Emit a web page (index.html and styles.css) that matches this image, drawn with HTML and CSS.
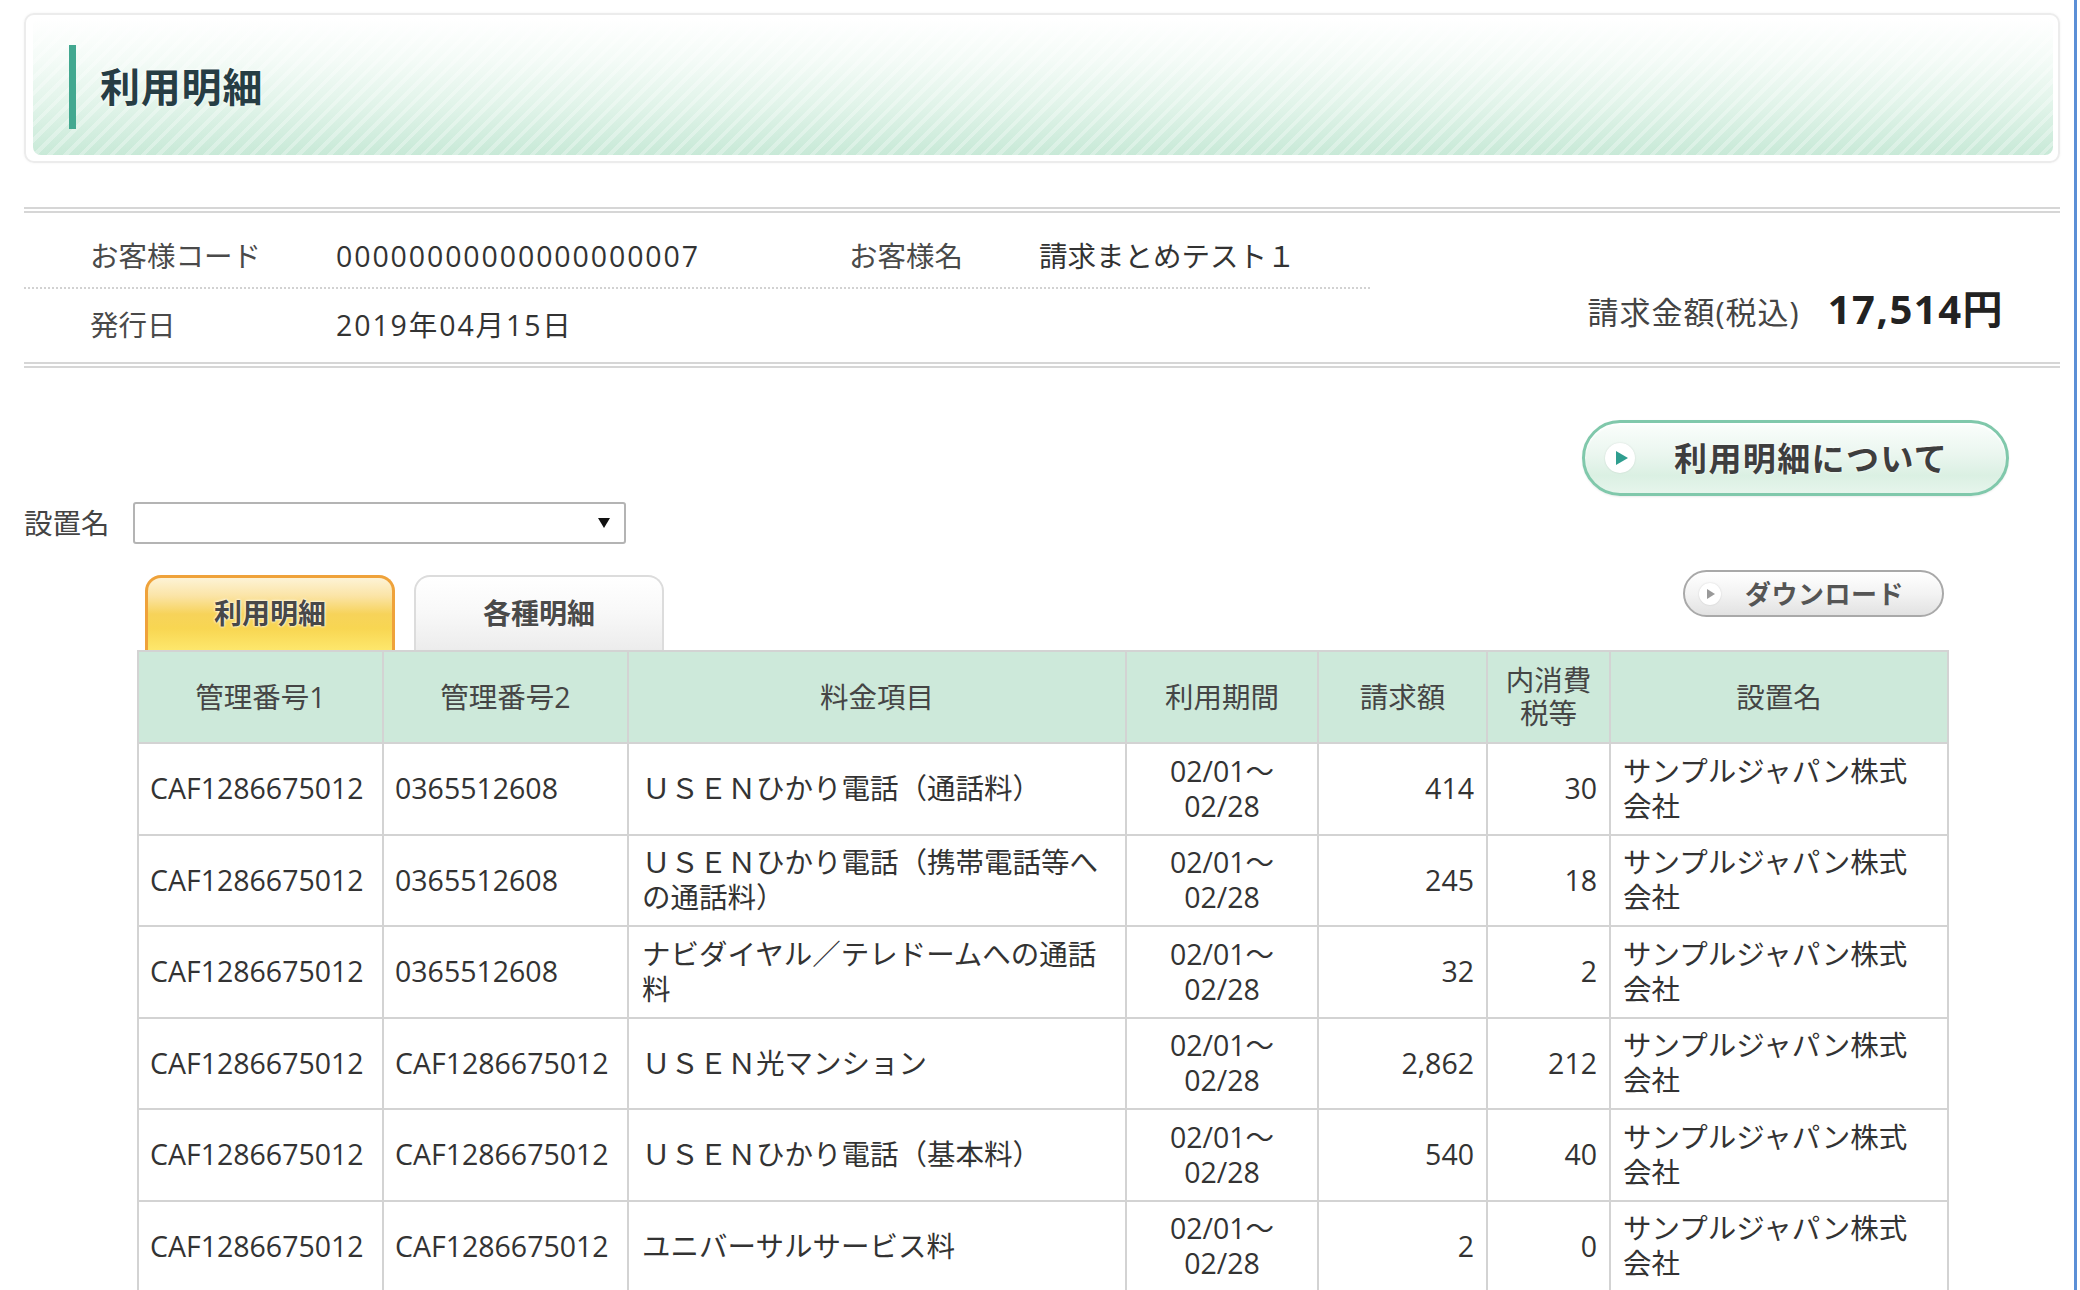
FILE: index.html
```html
<!DOCTYPE html>
<html lang="ja">
<head>
<meta charset="utf-8">
<title>利用明細</title>
<link rel="stylesheet" href="styles.css">
</head>
<body>
<div class="frame">
  <div class="page">
    <header class="page-head">
      <div class="page-head-inner">
        <span class="head-bar"></span>
        <h1>利用明細</h1>
      </div>
    </header>

    <section class="summary">
      <div class="summary-info">
        <div class="info-row row-1">
          <span class="label">お客様コード</span>
          <span class="value num code">00000000000000000007</span>
          <span class="label label-name">お客様名</span>
          <span class="value">請求まとめテスト１</span>
        </div>
        <div class="info-row row-2">
          <span class="label">発行日</span>
          <span class="value num">2019年04月15日</span>
        </div>
      </div>
      <div class="summary-total">
        <span class="total-label">請求金額(税込)</span>
        <span class="total-amount">17,514円</span>
      </div>
    </section>

    <div class="toolbar">
      <div class="filter">
        <span class="filter-label">設置名</span>
        <div class="select">
          <svg class="select-arrow" width="12" height="12" viewBox="0 0 12 12"><path d="M0 1 L12 1 L6 11 Z" fill="#111"/></svg>
        </div>
      </div>
      <a class="btn-about">
        <span class="about-icon"><svg width="14" height="16" viewBox="0 0 14 16"><path d="M1 1 L13 8 L1 15 Z" fill="#2f9e8f"/></svg></span>
        <span class="about-text">利用明細について</span>
      </a>
    </div>

    <div class="tab-row">
      <div class="tabs">
        <div class="tab tab-active">利用明細</div>
        <div class="tab tab-inactive">各種明細</div>
      </div>
      <a class="btn-download">
        <span class="dl-icon"><svg width="10" height="12" viewBox="0 0 10 12"><path d="M1 1 L9 6 L1 11 Z" fill="#9a9a9a"/></svg></span>
        <span class="dl-text">ダウンロード</span>
      </a>
    </div>

    <table class="detail-table">
      <colgroup>
        <col class="w-id"><col class="w-id"><col class="w-item"><col class="w-period"><col class="w-amount"><col class="w-tax"><col class="w-place">
      </colgroup>
      <thead>
        <tr>
          <th>管理番号1</th>
          <th>管理番号2</th>
          <th>料金項目</th>
          <th>利用期間</th>
          <th>請求額</th>
          <th>内消費税等</th>
          <th>設置名</th>
        </tr>
      </thead>
      <tbody>
        <tr>
          <td class="c-id">CAF1286675012</td>
          <td class="c-id">0365512608</td>
          <td class="c-item">ＵＳＥＮひかり電話（通話料）</td>
          <td class="c-period">02/01～<br>02/28</td>
          <td class="c-num">414</td>
          <td class="c-num">30</td>
          <td class="c-place">サンプルジャパン株式会社</td>
        </tr>
        <tr>
          <td class="c-id">CAF1286675012</td>
          <td class="c-id">0365512608</td>
          <td class="c-item">ＵＳＥＮひかり電話（携帯電話等への通話料）</td>
          <td class="c-period">02/01～<br>02/28</td>
          <td class="c-num">245</td>
          <td class="c-num">18</td>
          <td class="c-place">サンプルジャパン株式会社</td>
        </tr>
        <tr>
          <td class="c-id">CAF1286675012</td>
          <td class="c-id">0365512608</td>
          <td class="c-item">ナビダイヤル／テレドームへの通話料</td>
          <td class="c-period">02/01～<br>02/28</td>
          <td class="c-num">32</td>
          <td class="c-num">2</td>
          <td class="c-place">サンプルジャパン株式会社</td>
        </tr>
        <tr>
          <td class="c-id">CAF1286675012</td>
          <td class="c-id">CAF1286675012</td>
          <td class="c-item">ＵＳＥＮ光マンション</td>
          <td class="c-period">02/01～<br>02/28</td>
          <td class="c-num">2,862</td>
          <td class="c-num">212</td>
          <td class="c-place">サンプルジャパン株式会社</td>
        </tr>
        <tr>
          <td class="c-id">CAF1286675012</td>
          <td class="c-id">CAF1286675012</td>
          <td class="c-item">ＵＳＥＮひかり電話（基本料）</td>
          <td class="c-period">02/01～<br>02/28</td>
          <td class="c-num">540</td>
          <td class="c-num">40</td>
          <td class="c-place">サンプルジャパン株式会社</td>
        </tr>
        <tr>
          <td class="c-id">CAF1286675012</td>
          <td class="c-id">CAF1286675012</td>
          <td class="c-item">ユニバーサルサービス料</td>
          <td class="c-period">02/01～<br>02/28</td>
          <td class="c-num">2</td>
          <td class="c-num">0</td>
          <td class="c-place">サンプルジャパン株式会社</td>
        </tr>
      </tbody>
    </table>
  </div>
</div>
</body>
</html>
```

FILE: styles.css
```css
* { box-sizing: border-box; }
html, body { margin: 0; padding: 0; background: #fff; }
body {
  font-family: "Open Sans", "Noto Sans CJK JP", sans-serif;
  font-size: 28.5px;
  color: #333;
  overflow: hidden;
}
.frame {
  width: 2077px;
  min-height: 1290px;
  border-right: 3px solid #5b8fd6;
}
.page {
  margin-left: 24px;
  width: 2036px;
  padding-top: 13px;
}

/* page heading */
.page-head {
  border: 2px solid #ececec;
  border-radius: 10px;
  padding: 4px 5px 6px 7px;
  box-shadow: 0 0 3px rgba(0,0,0,0.05);
}
.page-head-inner {
  height: 136px;
  border-radius: 8px;
  display: flex;
  align-items: center;
  padding-left: 36px;
  background:
    repeating-linear-gradient(135deg, rgba(255,255,255,0) 0 7px, rgba(255,255,255,0.3) 7px 11px),
    linear-gradient(to bottom, #ffffff 0%, #f4fbf7 30%, #e2f4ea 62%, #c8e9d7 100%);
}
.head-bar {
  width: 7px;
  height: 84px;
  background: #42a890;
}
.page-head h1 {
  margin: 0 0 0 24px;
  font-size: 40px;
  font-weight: 700;
  line-height: 1;
  color: #263d44;
  letter-spacing: 0.8px;
  text-shadow: 0 0 3px #fff;
}

/* summary */
.summary {
  margin-top: 44px;
  display: flex;
  border-top: 6px double #d6d6d6;
  border-bottom: 6px double #d6d6d6;
}
.summary-info { width: 1346px; }
.info-row {
  display: flex;
  align-items: center;
  padding-left: 66px;
}
.row-1 {
  height: 76px;
  padding-top: 13px;
  border-bottom: 2px dotted #d2d2d2;
}
.row-2 { height: 73px; }
.label {
  width: 246px;
  color: #4a4a4a;
  line-height: 1.2;
}
.label-name { width: 190px; }
.value { color: #333; line-height: 1.2; }
.num { letter-spacing: 1.9px; }
.code { width: 513px; }
.summary-total {
  flex: 1;
  display: flex;
  justify-content: flex-end;
  align-items: baseline;
  padding-right: 56px;
  padding-top: 72px;
}
.total-label {
  font-size: 31px;
  color: #444;
  line-height: 1.2;
  letter-spacing: 1px;
}
.total-amount {
  margin-left: 28px;
  font-size: 40px;
  font-weight: 700;
  color: #222;
  letter-spacing: 1.5px;
  line-height: 1.2;
}

/* toolbar */
.toolbar {
  margin-top: 52px;
  padding-right: 51px;
  display: flex;
  justify-content: space-between;
  align-items: flex-start;
}
.filter {
  margin-top: 82px;
  display: flex;
  align-items: center;
}
.filter-label {
  color: #444;
  line-height: 1.2;
}
.select {
  margin-left: 23px;
  width: 493px;
  height: 42px;
  border: 2px solid #b4b4b4;
  border-radius: 3px;
  background: #fff;
  display: flex;
  align-items: center;
  justify-content: flex-end;
  padding-right: 14px;
}
.btn-about {
  width: 427px;
  height: 76px;
  border: 3px solid #80c8ab;
  border-radius: 38px;
  background: linear-gradient(to bottom, #fbfefc 0%, #eaf6ef 45%, #dbf0e3 75%, #e6f5ec 100%);
  box-shadow: inset 0 2px 2px rgba(255,255,255,0.9), 0 1px 2px rgba(0,0,0,0.08);
  display: flex;
  align-items: center;
  padding-left: 20px;
  text-decoration: none;
}
.about-icon {
  width: 30px;
  height: 30px;
  border-radius: 50%;
  background: #fff;
  box-shadow: 0 0 2px rgba(0,0,0,0.12);
  display: flex;
  align-items: center;
  justify-content: center;
  padding-left: 3px;
}
.about-text {
  margin-left: 39px;
  font-size: 33px;
  font-weight: 700;
  color: #3e3e3e;
  letter-spacing: 1.4px;
  line-height: 1;
  text-shadow: 0 0 3px #fff;
}

/* tabs */
.tab-row {
  margin: 26px 0 0 113px;
  width: 1810px;
  display: flex;
  justify-content: space-between;
  align-items: flex-start;
}
.tabs {
  display: flex;
  gap: 19px;
  padding-left: 8px;
  margin-top: 5px;
}
.tab {
  width: 250px;
  height: 75px;
  display: flex;
  align-items: center;
  justify-content: center;
  font-size: 28px;
  font-weight: 700;
  line-height: 1;
  border-radius: 16px 16px 0 0;
  padding-bottom: 2px;
}
.tab-active {
  border: 3px solid #efa23a;
  border-bottom: 0;
  color: #484848;
  background: linear-gradient(to bottom, #fdf3d6 0%, #fbe4a6 25%, #f7d35a 50%, #f8d652 70%, #fde76c 100%);
  text-shadow: 0 0 3px #fff, 0 0 2px #fff;
}
.tab-inactive {
  border: 2px solid #dcdcdc;
  border-bottom: 0;
  color: #4a4a4a;
  background: linear-gradient(to bottom, #ffffff 0%, #f8f8f8 50%, #ececec 100%);
  text-shadow: 0 0 2px #fff;
}
.btn-download {
  margin-right: 3px;
  width: 261px;
  height: 47px;
  border: 2px solid #a9a9a9;
  border-radius: 24px;
  background: linear-gradient(to bottom, #ffffff 0%, #f3f3f3 50%, #e2e2e2 100%);
  box-shadow: inset 0 1px 1px #fff;
  display: flex;
  align-items: center;
  padding-left: 14px;
  text-decoration: none;
}
.dl-icon {
  width: 22px;
  height: 22px;
  border-radius: 50%;
  background: #fff;
  box-shadow: 0 0 2px rgba(0,0,0,0.15);
  display: flex;
  align-items: center;
  justify-content: center;
  padding-left: 2px;
}
.dl-text {
  margin-left: 24px;
  font-size: 26px;
  font-weight: 700;
  color: #555;
  letter-spacing: 0.5px;
  line-height: 1;
}

/* table */
.detail-table {
  margin-left: 113px;
  width: 1810px;
  border-collapse: collapse;
  table-layout: fixed;
}
.w-id { width: 245px; }
.w-item { width: 498px; }
.w-period { width: 192px; }
.w-amount { width: 169px; }
.w-tax { width: 123px; }
.w-place { width: 338px; }
.detail-table th,
.detail-table td {
  border: 2px solid #d3d3d3;
  padding: 0 10px;
  line-height: 35px;
  font-weight: normal;
  vertical-align: middle;
}
.detail-table thead tr { height: 92px; }
.detail-table tbody tr { height: 91.5px; }
.detail-table th {
  background: #cde9da;
  color: #454545;
  text-align: center;
  line-height: 33px;
  padding: 0 8px;
}
.c-id { padding-left: 11px !important; color: #333; white-space: nowrap; }
.c-item { padding-left: 13px !important; color: #333; }
.c-period { text-align: center; color: #333; }
.c-num { text-align: right; padding-right: 12px !important; color: #333; }
.c-place { padding-left: 12px !important; padding-right: 20px !important; color: #333; }
```
